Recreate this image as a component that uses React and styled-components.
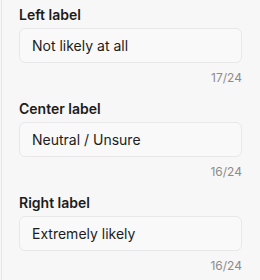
import React from 'react'
import styled, { createGlobalStyle } from 'styled-components'

const Global = createGlobalStyle`
  html, body {
    margin: 0;
    padding: 0;
    background: #f7f7f7;
  }
  body {
    font-family: Inter, "Noto Sans", "Liberation Sans", sans-serif;
    -webkit-font-smoothing: antialiased;
  }
`

const Panel = styled.div`
  margin-left: 1px;
  border-left: 1px solid #e6e6e6;
  min-height: 280px;
  box-sizing: border-box;
  padding: 5px 18px 0 17px;
  display: flex;
  flex-direction: column;
  gap: 13px;
`

const Field = styled.div`
  display: flex;
  flex-direction: column;
`

const Label = styled.label`
  font-size: 14px;
  line-height: 20px;
  font-weight: 600;
  color: #1c1c1c;
  margin-bottom: 3px;
`

const Input = styled.input`
  box-sizing: border-box;
  height: 35px;
  width: 100%;
  padding: 0 12px;
  border: 1px solid #e8e8e8;
  border-radius: 6px;
  background: #f9f9f9;
  font-family: inherit;
  font-size: 14px;
  color: #1c1c1c;
  outline: none;
`

const Counter = styled.div`
  margin-top: 7px;
  text-align: right;
  font-size: 12px;
  line-height: 16px;
  color: #8c8c8c;
`

const fields = [
  { label: 'Left label', value: 'Not likely at all' },
  { label: 'Center label', value: 'Neutral / Unsure' },
  { label: 'Right label', value: 'Extremely likely' }
]

const App = () => (
  <>
    <Global />
    <Panel>
      {fields.map((f, i) => (
        <Field key={i}>
          <Label>{f.label}</Label>
          <Input defaultValue={f.value} maxLength={24} />
          <Counter>{f.value.length}/24</Counter>
        </Field>
      ))}
    </Panel>
  </>
)

export default App
